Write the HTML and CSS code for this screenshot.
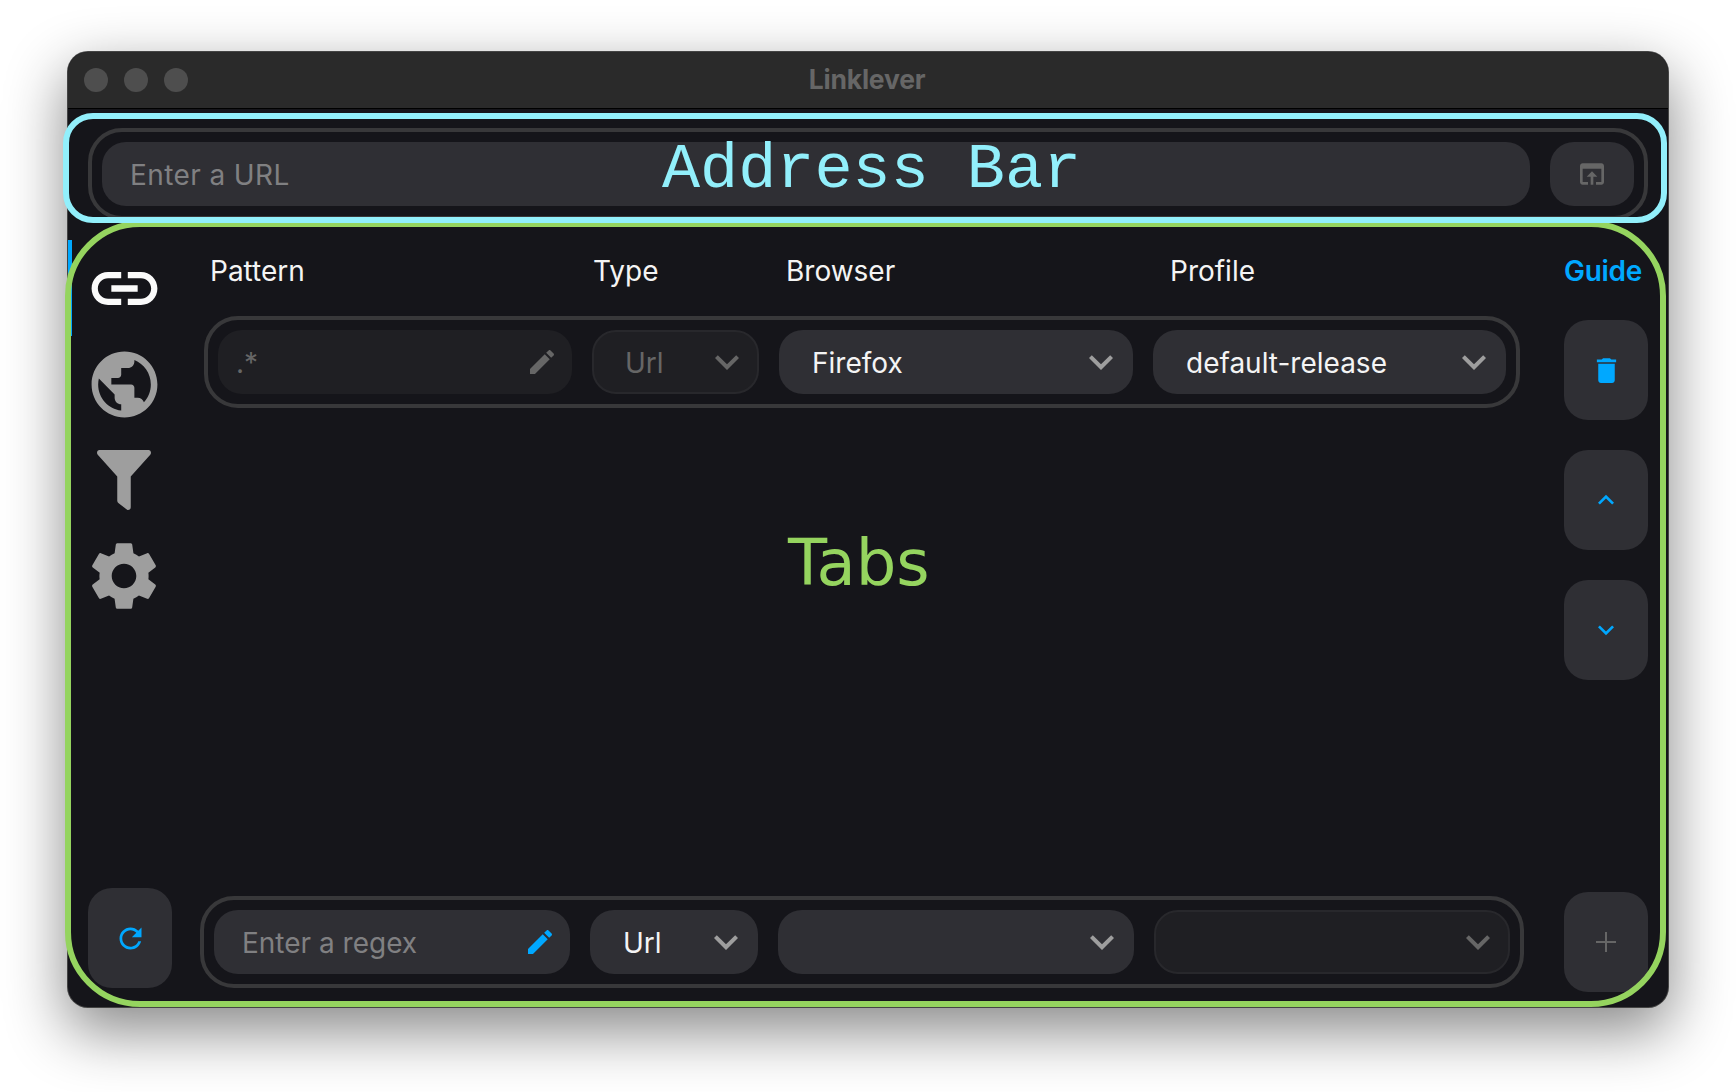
FILE: index.html
```html
<!DOCTYPE html>
<html lang="en">
<head>
<meta charset="utf-8">
<title>Linklever</title>
<link rel="stylesheet" href="styles.css">
</head>
<body>
<div class="window">
  <header class="titlebar">
    <div class="lights"><i></i><i></i><i></i></div>
    <div class="title">Linklever</div>
  </header>

  <section class="address">
    <div class="pill address-pill">
      <div class="field grow"><span class="ph">Enter a URL</span></div>
      <button class="btn btn-open"><svg class="ic-32 muted" viewBox="0 0 24 24"><path d="M19 4H5c-1.11 0-2 .9-2 2v12c0 1.1.89 2 2 2h4v-2H5V8h14v10h-4v2h4c1.1 0 2-.9 2-2V6c0-1.1-.89-2-2-2zm-7 6l-4 4h3v6h2v-6h3l-4-4z"/></svg></button>
    </div>
  </section>

  <main class="tabs">
    <nav class="sidebar">
      <div class="navlist">
        <div class="nav active"><svg class="ic-nav white" viewBox="0 0 24 24"><path d="M3.9 12c0-1.71 1.39-3.1 3.1-3.1h4V7H7c-2.76 0-5 2.24-5 5s2.24 5 5 5h4v-1.9H7c-1.71 0-3.1-1.39-3.1-3.1zM8 13h8v-2H8v2zm9-6h-4v1.9h4c1.71 0 3.1 1.39 3.1 3.1s-1.39 3.1-3.1 3.1h-4V17h4c2.76 0 5-2.24 5-5s-2.24-5-5-5z"/></svg></div>
        <div class="nav"><svg class="ic-nav grey" viewBox="0 0 24 24"><path d="M12 2C6.48 2 2 6.48 2 12s4.48 10 10 10 10-4.48 10-10S17.52 2 12 2zm-1 17.93c-3.95-.49-7-3.85-7-7.93 0-.62.08-1.21.21-1.79L9 15v1c0 1.1.9 2 2 2v1.93zm6.9-2.54c-.26-.81-1-1.39-1.9-1.39h-1v-3c0-.55-.45-1-1-1H8v-2h2c.55 0 1-.45 1-1V7h2c1.1 0 2-.9 2-2v-.41c2.93 1.19 5 4.06 5 7.41 0 2.08-.8 3.97-2.1 5.39z"/></svg></div>
        <div class="nav"><svg class="ic-funnel grey" viewBox="0 0 512 512" preserveAspectRatio="none"><path d="M487.976 0H24.028C2.71 0-8.047 25.866 7.058 40.971L192 225.941V432c0 7.831 3.821 15.17 10.237 19.662l80 55.98C298.02 518.69 320 507.493 320 487.98V225.941l184.947-184.97C520.021 25.896 509.338 0 487.976 0z"/></svg></div>
        <div class="nav"><svg class="ic-gear grey" viewBox="0 0 24 24"><path d="M19.14 12.94c.04-.3.06-.61.06-.94 0-.32-.02-.64-.07-.94l2.03-1.58c.18-.14.23-.41.12-.61l-1.92-3.32c-.12-.22-.37-.29-.59-.22l-2.39.96c-.5-.38-1.03-.7-1.62-.94l-.36-2.54c-.04-.24-.24-.41-.48-.41h-3.84c-.24 0-.43.17-.47.41l-.36 2.54c-.59.24-1.13.57-1.62.94l-2.39-.96c-.22-.08-.47 0-.59.22L2.74 8.87c-.12.21-.08.47.12.61l2.03 1.58c-.05.3-.09.63-.09.94s.02.64.07.94l-2.03 1.58c-.18.14-.23.41-.12.61l1.92 3.32c.12.22.37.29.59.22l2.39-.96c.5.38 1.03.7 1.62.94l.36 2.54c.05.24.24.41.48.41h3.84c.24 0 .44-.17.47-.41l.36-2.54c.59-.24 1.13-.56 1.62-.94l2.39.96c.22.08.47 0 .59-.22l1.92-3.32c.12-.22.07-.47-.12-.61l-2.01-1.58zM12 15.6c-1.98 0-3.6-1.62-3.6-3.6s1.62-3.6 3.6-3.6 3.6 1.62 3.6 3.6-1.62 3.6-3.6 3.6z"/></svg></div>
      </div>
      <button class="btn btn-refresh"><svg class="ic-33 blue" viewBox="0 0 24 24"><path d="M17.65 6.35C16.2 4.9 14.21 4 12 4c-4.42 0-7.99 3.58-7.99 8s3.57 8 7.99 8c3.73 0 6.84-2.55 7.73-6h-2.08c-.82 2.33-3.04 4-5.65 4-3.31 0-6-2.69-6-6s2.69-6 6-6c1.66 0 3.14.69 4.22 1.78L13 11h7V4l-2.35 2.35z"/></svg></button>
    </nav>

    <div class="content">
      <div class="head">
        <span class="col-pattern">Pattern</span>
        <span class="col-type">Type</span>
        <span class="col-browser">Browser</span>
        <span class="col-profile">Profile</span>
        <span class="guide">Guide</span>
      </div>

      <div class="body">
        <div class="pill rule">
          <div class="field w-pattern dim short-pad"><span class="val-dim">.*</span><svg class="ic-32 muted" viewBox="0 0 24 24"><path d="M3 17.25V21h3.75L17.81 9.94l-3.75-3.75L3 17.25zM20.71 7.04c.39-.39.39-1.02 0-1.41l-2.34-2.34c-.39-.39-1.02-.39-1.41 0l-1.83 1.83 3.75 3.75 1.83-1.83z"/></svg></div>
          <div class="field w-type dim outlined"><span class="val-dim">Url</span><svg class="chev muted" viewBox="0 0 24 24"><path d="M16.59 8.59L12 13.17 7.41 8.59 6 10l6 6 6-6z"/></svg></div>
          <div class="field w-browser"><span class="val">Firefox</span><svg class="chev grey" viewBox="0 0 24 24"><path d="M16.59 8.59L12 13.17 7.41 8.59 6 10l6 6 6-6z"/></svg></div>
          <div class="field w-profile"><span class="val">default-release</span><svg class="chev grey" viewBox="0 0 24 24"><path d="M16.59 8.59L12 13.17 7.41 8.59 6 10l6 6 6-6z"/></svg></div>
        </div>
        <div class="actions">
          <button class="btn btn-tall"><svg class="ic-33 blue" viewBox="0 0 24 24"><path d="M6 19c0 1.1.9 2 2 2h8c1.1 0 2-.9 2-2V7H6v12zM19 4h-3.5l-1-1h-5l-1 1H5v2h14V4z"/></svg></button>
          <button class="btn btn-tall"><svg class="ic-32 blue" viewBox="0 0 24 24"><path d="M7.41 15.41L12 10.83l4.59 4.58L18 14l-6-6-6 6z"/></svg></button>
          <button class="btn btn-tall"><svg class="ic-32 blue" viewBox="0 0 24 24"><path d="M7.41 8.59L12 13.17l4.59-4.58L18 10l-6 6-6-6z"/></svg></button>
        </div>
      </div>

      <div class="foot">
        <div class="pill add">
          <div class="field w-pattern-b"><span class="ph">Enter a regex</span><svg class="ic-32 blue" viewBox="0 0 24 24"><path d="M3 17.25V21h3.75L17.81 9.94l-3.75-3.75L3 17.25zM20.71 7.04c.39-.39.39-1.02 0-1.41l-2.34-2.34c-.39-.39-1.02-.39-1.41 0l-1.83 1.83 3.75 3.75 1.83-1.83z"/></svg></div>
          <div class="field w-type-b"><span class="val">Url</span><svg class="chev grey" viewBox="0 0 24 24"><path d="M16.59 8.59L12 13.17 7.41 8.59 6 10l6 6 6-6z"/></svg></div>
          <div class="field w-pattern-b end"><svg class="chev grey" viewBox="0 0 24 24"><path d="M16.59 8.59L12 13.17 7.41 8.59 6 10l6 6 6-6z"/></svg></div>
          <div class="field w-pattern-b end dim outlined"><svg class="chev muted" viewBox="0 0 24 24"><path d="M16.59 8.59L12 13.17 7.41 8.59 6 10l6 6 6-6z"/></svg></div>
        </div>
        <button class="btn btn-tall"><svg class="plus muted" viewBox="0 0 20 20"><path d="M9 0h2v9h9v2h-9v9H9v-9H0V9h9z"/></svg></button>
      </div>
    </div>
  </main>

  <div class="note note-tabs"><span>Tabs</span></div>
  <div class="note note-address"><span>Address Bar</span></div>
</div>
</body>
</html>
```

FILE: styles.css
```css
* { box-sizing: border-box; }
html, body { margin: 0; height: 100%; overflow: hidden; background: #fff; }
body { padding: 52px 0 0 68px; font-family: Inter, "Noto Sans", sans-serif; font-size: 28px; color: #f4f4f4; }
svg { display: block; fill: currentColor; flex: none; }

.window {
  position: relative; width: 1600px; height: 955px; display: flex; flex-direction: column;
  background: #15151a; border-radius: 20px;
  box-shadow: 0 0 0 1px #444, 0 22px 60px 2px rgba(0,0,0,.47);
}

.titlebar {
  flex: none; height: 57px; display: grid; grid-template-columns: 1fr auto 1fr; align-items: center;
  padding: 0 16px; background: #2a2a2a; border-bottom: 1px solid #000; border-radius: 20px 20px 0 0;
}
.lights { display: flex; gap: 16px; margin-top: -1px; }
.lights i { width: 24px; height: 24px; border-radius: 50%; background: #4e4e4e; }
.title { font-size: 26.5px; font-weight: 700; color: #666; margin-top: -3px; margin-right: 2px; letter-spacing: -.2px; }

.address { flex: none; height: 111px; padding: 19px 20px 0; }
.pill { display: flex; gap: 20px; height: 92px; padding: 10px; border: 4px solid #38383a; border-radius: 34px; }
.grow { flex: 1; }

.field {
  display: flex; align-items: center; justify-content: space-between; height: 64px;
  padding: 0 20px 0 33px; background: #2f2f34; border-radius: 24px;
}
.address-pill .field { padding-left: 28px; }
.address-pill .ph { letter-spacing: .4px; }
.dim { background: #1f1f23; }
.outlined { border: 2px solid #28282c; padding-left: 31px; padding-right: 18px; }
.end { justify-content: flex-end; }
.short-pad { padding-left: 18px; padding-right: 14px; }

.ph, .val, .val-dim { padding-top: 2px; }
.ph { color: #808082; }
.val { color: #f4f4f4; }
.val-dim { color: #666; }

.w-pattern { width: 354px; }
.w-type { width: 167px; }
.w-browser { width: 354px; }
.w-profile { width: 353px; }
.w-pattern-b { width: 356px; }
.w-type-b { width: 168px; }
.w-pattern-b:first-child { padding-left: 28px; padding-right: 14px; }

.btn {
  display: flex; align-items: center; justify-content: center; padding: 0; border: 0;
  width: 84px; background: #2f2f34; border-radius: 24px;
}
.btn-open { height: 64px; flex: none; }
.btn-tall, .btn-refresh { height: 100px; flex: none; }

.ic-32 { width: 32px; height: 32px; }
.ic-33 { width: 33px; height: 33px; }
.ic-nav { width: 79px; height: 79px; }
.ic-funnel { width: 54px; height: 60px; }
.ic-gear { width: 82px; height: 82px; }
.chev { width: 48px; height: 48px; margin-right: -12px; }
.plus { width: 20px; height: 20px; }
.muted { color: #666; }
.grey { color: #9e9e9e; }
.white { color: #fafafa; }
.blue { color: #00a8ff; }

.tabs { flex: 1; display: flex; min-height: 0; }

.sidebar {
  flex: none; width: 112px; display: flex; flex-direction: column; justify-content: space-between;
  padding: 20px 0 19px; overflow: visible;
}
.navlist { display: flex; flex-direction: column; }
.nav { height: 96px; display: flex; align-items: center; justify-content: center; border-left: 4px solid transparent; padding-right: 4px; }
.nav.active { border-left-color: #00a8ff; }
.btn-refresh { margin-left: 20px; }

.content { flex: 1; min-width: 0; display: flex; flex-direction: column; padding: 0 20px 15px 0; }

.head { flex: none; height: 96px; padding: 5px 6px 0 30px; display: flex; align-items: center; }
.col-pattern { width: 383px; }
.col-type { width: 193px; }
.col-browser { width: 384px; }
.col-profile { flex: 1; }
.guide { color: #00a8ff; font-weight: 600; letter-spacing: -.3px; }

.body { flex: 1; display: flex; justify-content: space-between; align-items: flex-start; }
.rule { margin-left: 24px; }
.actions { display: flex; flex-direction: column; gap: 30px; padding-top: 4px; }

.foot { flex: none; display: flex; justify-content: space-between; align-items: center; padding-left: 20px; }

.note { position: absolute; pointer-events: none; }
.note span { position: absolute; white-space: nowrap; }
.note-address {
  left: -5px; top: 61px; width: 1604px; height: 110px; border: 6px solid #92effb; border-radius: 30px;
}
.note-address span {
  left: 593px; top: 15px; font-family: "Liberation Mono", monospace; font-size: 63.5px; line-height: 72px; color: #92effb;
}
.note-tabs {
  left: -3px; top: 169px; width: 1601px; height: 786px; border: 6px solid #95d45f; border-radius: 75px;
}
.note-tabs span {
  left: 717px; top: 300px; font-family: "DejaVu Sans", sans-serif; font-size: 64px; line-height: 72px; color: #95d45f;
}
```
